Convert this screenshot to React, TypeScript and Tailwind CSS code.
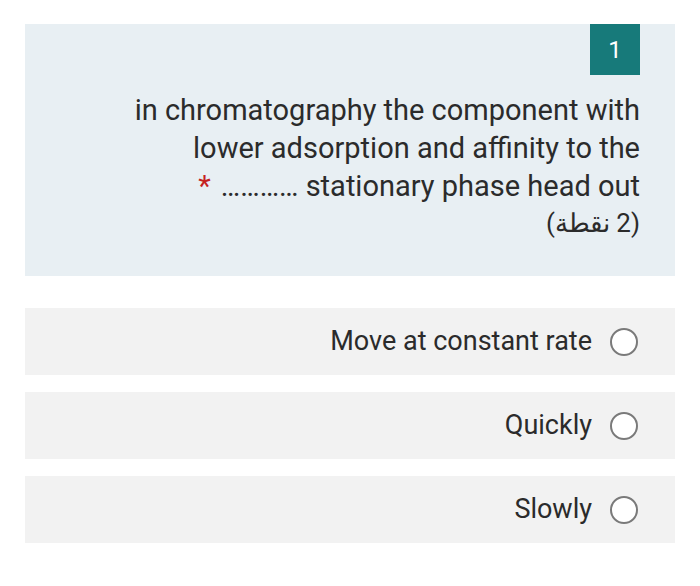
import React from "react";

const options = ["Move at constant rate", "Quickly", "Slowly"];

export default function App() {
  return (
    <div className="w-[700px] h-[586px] bg-white pt-[24px] px-[25px]" style={{ fontFamily: "Roboto, 'Noto Sans', sans-serif" }}>
      <div className="bg-[#e8eff3] h-[252px] pr-[35px] flex flex-col items-end">
        <div className="w-[50px] h-[51px] bg-[#177a7a] text-white text-[24px] flex items-center justify-center">1</div>
        <div className="mt-[16px] text-right text-[29px] leading-[38px] text-[#2b2b2b]">
          <div>in chromatography the component with</div>
          <div>lower adsorption and affinity to the</div>
          <div>
            <span className="text-[#c5221f] mr-[10px]">*</span>
            <span>………… stationary phase head out</span>
          </div>
          <div className="leading-[36px] text-[26px]" dir="rtl">(2 نقطة)</div>
        </div>
      </div>
      <div className="mt-[32px] flex flex-col gap-[17px]">
        {options.map((o) => (
          <div key={o} className="h-[67px] bg-[#f2f2f2] flex items-center justify-end pr-[37px] gap-[18px]">
            <span className="text-[27px] text-[#2b2b2b]">{o}</span>
            <span className="w-[28px] h-[28px] rounded-full border-2 border-[#7a7a7a] bg-white" />
          </div>
        ))}
      </div>
    </div>
  );
}
